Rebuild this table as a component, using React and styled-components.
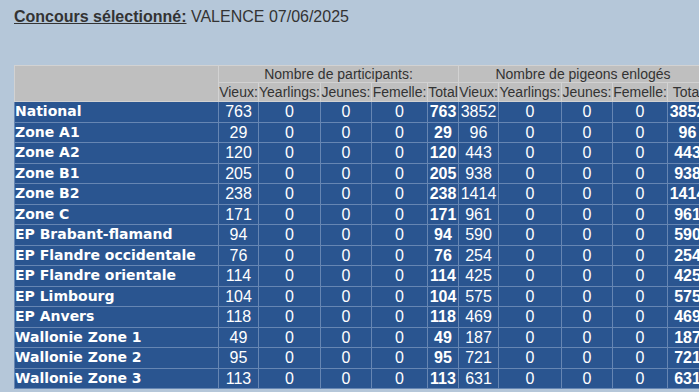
import React from 'react';
import styled, { createGlobalStyle } from 'styled-components';

const GlobalStyle = createGlobalStyle`
  html, body {
    margin: 0;
    padding: 0;
    overflow: hidden;
    background: #b5c7d9;
  }
`

const rows = [
  ['National', 763, 3852],
  ['Zone A1', 29, 96],
  ['Zone A2', 120, 443],
  ['Zone B1', 205, 938],
  ['Zone B2', 238, 1414],
  ['Zone C', 171, 961],
  ['EP Brabant-flamand', 94, 590],
  ['EP Flandre occidentale', 76, 254],
  ['EP Flandre orientale', 114, 425],
  ['EP Limbourg', 104, 575],
  ['EP Anvers', 118, 469],
  ['Wallonie Zone 1', 49, 187],
  ['Wallonie Zone 2', 95, 721],
  ['Wallonie Zone 3', 113, 631],
]

// widths measured off the reference, border excluded
const subHeads = [
  ['Vieux:', 39], ['Yearlings:', 61], ['Jeunes:', 50], ['Femelle:', 55], ['Total', 30],
  ['Vieux:', 39], ['Yearlings:', 62], ['Jeunes:', 50], ['Femelle:', 54], ['Total', 39],
]

const App = () => {
  return (
    <Page>
      <GlobalStyle />
      <Title>
        <Label>Concours sélectionné:</Label> VALENCE 07/06/2025
      </Title>
      <Table>
        <thead>
          <tr>
            <HeadCell rowSpan={2} $w={203}></HeadCell>
            <HeadCell colSpan={5} $h={16}>Nombre de participants:</HeadCell>
            <HeadCell colSpan={5} $h={16}>Nombre de pigeons enlogés</HeadCell>
          </tr>
          <tr>
            {subHeads.map(([t, w], i) => (
              <HeadCell key={i} $w={w} $h={18}>{t}</HeadCell>
            ))}
          </tr>
        </thead>
        <tbody>
          {rows.map(([name, part, pig]) => (
            <tr key={name}>
              <NameCell>{name}</NameCell>
              <NumCell>{part}</NumCell>
              <NumCell>0</NumCell>
              <NumCell>0</NumCell>
              <NumCell>0</NumCell>
              <NumCell $bold>{part}</NumCell>
              <NumCell>{pig}</NumCell>
              <NumCell>0</NumCell>
              <NumCell>0</NumCell>
              <NumCell>0</NumCell>
              <NumCell $bold>{pig}</NumCell>
            </tr>
          ))}
        </tbody>
      </Table>
    </Page>
  );
};

export default App;

const Page = styled.div`
  padding: 7px 14px;
  width: 760px;
`
const Title = styled.div`
  font-family: 'Liberation Sans', Arial, sans-serif;
  font-size: 16px;
  line-height: 19px;
  color: #333;
  margin-bottom: 39px;
`
const Label = styled.span`
  font-weight: bold;
  text-decoration: underline;
`
const Table = styled.table`
  border-collapse: collapse;
  table-layout: fixed;
  border: 1px solid #a9b3bd;
`
const HeadCell = styled.th`
  background: #bfbfbf;
  border: 1px solid #d2d2d2;
  color: #333;
  font-family: 'Liberation Sans', Arial, sans-serif;
  font-size: 14px;
  font-weight: normal;
  padding: 0;
  line-height: ${p => (p.$h ? p.$h + 'px' : '16px')};
  width: ${p => (p.$w ? p.$w + 'px' : 'auto')};
  text-align: center;
  white-space: nowrap;
`
const NameCell = styled.td`
  background: #2a5590;
  border: 1px solid #6686b3;
  color: #fff;
  font-family: 'DejaVu Sans', Verdana, sans-serif;
  font-size: 14px;
  font-weight: bold;
  line-height: 19.5px;
  padding: 0 1px 0 0;
  white-space: nowrap;
`
const NumCell = styled.td`
  background: #2a5590;
  border: 1px solid #6686b3;
  color: #fff;
  font-family: 'Liberation Sans', Arial, sans-serif;
  font-size: 16px;
  font-weight: ${p => (p.$bold ? 'bold' : 'normal')};
  line-height: 19.5px;
  padding: 0;
  text-align: center;
  white-space: nowrap;
`
